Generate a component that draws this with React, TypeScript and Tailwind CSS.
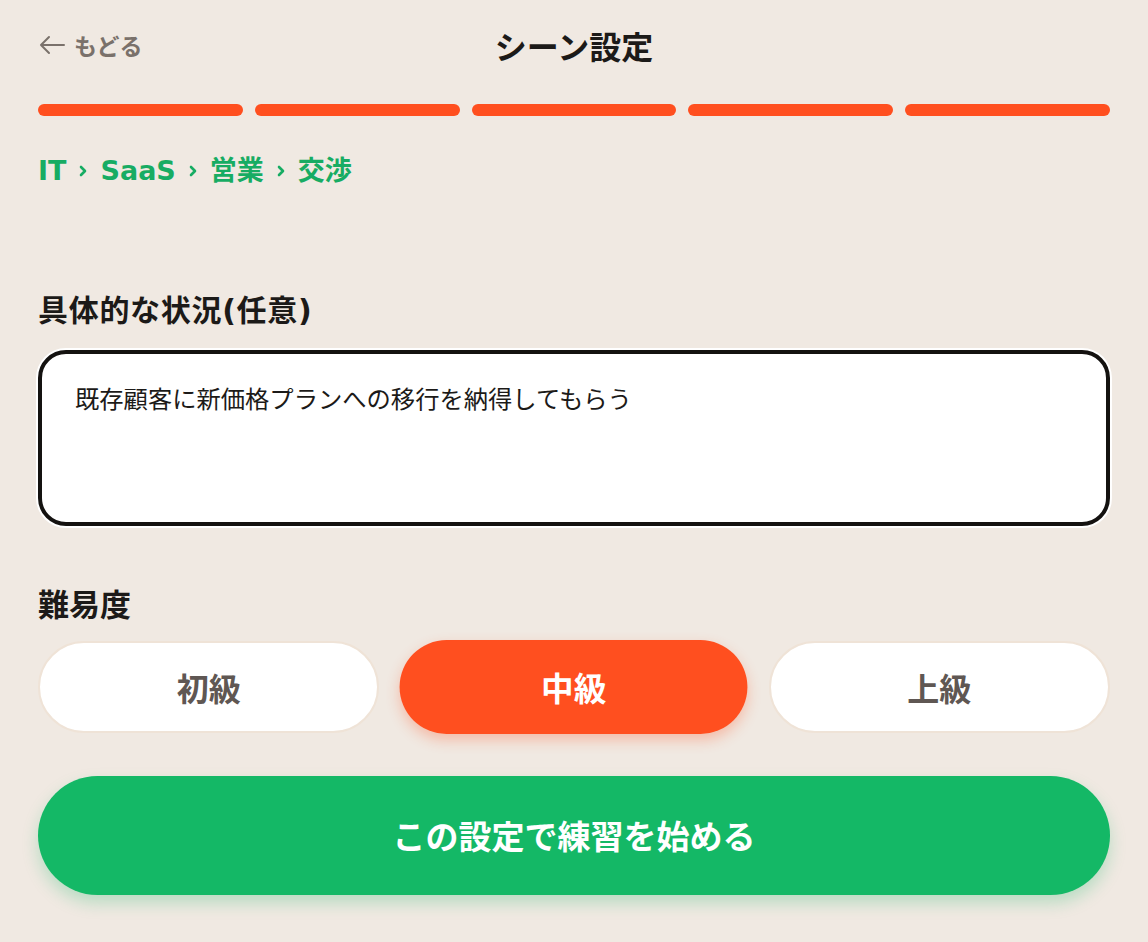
import { useState } from 'react';

const levels = ['初級', '中級', '上級'];
const crumbs = ['IT', 'SaaS', '営業', '交渉'];

function Chevron() {
  return (
    <svg width="10" height="14" viewBox="0 0 10 14" className="shrink-0">
      <path d="M3 3l4 4-4 4" fill="none" stroke="currentColor" strokeWidth="2.6" strokeLinecap="round" strokeLinejoin="round" />
    </svg>
  );
}

export default function App() {
  const [level, setLevel] = useState('中級');
  const [situation, setSituation] = useState('既存顧客に新価格プランへの移行を納得してもらう');

  return (
    <div
      className="min-h-[942px] w-full bg-[#f0e9e2] px-[38px] pt-[24px] text-[#1c1a18]"
      style={{ fontFamily: '"Noto Sans CJK JP", "Noto Sans", sans-serif' }}
    >
      {/* Header */}
      <div className="relative flex h-[42px] items-center justify-center">
        <button
          type="button"
          className="absolute left-0 flex items-center gap-[8px] text-[23px] font-bold text-[#7a716b]"
        >
          <svg width="28" height="20" viewBox="0 0 28 20">
            <path d="M26 10H3M11 2L3 10l8 8" fill="none" stroke="currentColor" strokeWidth="2" strokeLinecap="round" strokeLinejoin="round" />
          </svg>
          <span>もどる</span>
        </button>
        <h1 className="text-[32px] font-bold">シーン設定</h1>
      </div>

      {/* Progress */}
      <div className="mt-[38px] grid grid-cols-5 gap-[12px]">
        {[0, 1, 2, 3, 4].map(i => (
          <div key={i} className="h-[12px] rounded-full bg-[#ff4f1f]" />
        ))}
      </div>

      {/* Breadcrumb */}
      <div
        className="mt-[37px] flex h-[36px] items-center gap-[12px] text-[27px] font-bold text-[#17ac63]"
        style={{ fontFamily: '"DejaVu Sans", "Noto Sans CJK JP", sans-serif' }}
      >
        {crumbs.map((c, i) => (
          <span key={c} className="flex items-center gap-[12px]">
            {i > 0 && <Chevron />}
            <span>{c}</span>
          </span>
        ))}
      </div>

      {/* Situation */}
      <label
        className="mt-[104px] block h-[36px] text-[30px] font-bold leading-[36px] tracking-[0.7px]"
        style={{ fontFamily: '"DejaVu Sans", "Noto Sans CJK JP", sans-serif' }}
      >
        具体的な状況(任意)
      </label>
      <textarea
        value={situation}
        onChange={e => setSituation(e.target.value)}
        className="mt-[21px] block h-[176px] w-full resize-none rounded-[28px] border-[4px] border-[#141210] bg-white px-[33px] pt-[26px] text-[24.3px] leading-[36px] text-[#1c1a18] shadow-[0_0_0_2px_#ffffff] outline-none"
      />

      {/* Difficulty */}
      <div className="mt-[59px] h-[36px] text-[31px] font-bold leading-[36px]">難易度</div>
      <div className="mt-[20px] grid grid-cols-3 gap-[24px]">
        {levels.map(l => (
          <button
            key={l}
            type="button"
            onClick={() => setLevel(l)}
            className={`flex h-[92px] items-center justify-center rounded-full text-[32px] font-bold ${
              l === level
                ? 'scale-[1.02] bg-[#ff4f1f] text-white shadow-[0_6px_14px_rgba(255,79,31,0.3)]'
                : 'border-[2px] border-[#efe3d7] bg-white text-[#5f5753]'
            }`}
          >
            {l}
          </button>
        ))}
      </div>

      {/* Start */}
      <button
        type="button"
        className="mt-[43px] flex h-[119px] w-full items-center justify-center rounded-full bg-[#14b866] text-[33px] font-bold text-white shadow-[0_8px_16px_rgba(20,184,102,0.25)]"
      >
        この設定で練習を始める
      </button>
    </div>
  );
}
